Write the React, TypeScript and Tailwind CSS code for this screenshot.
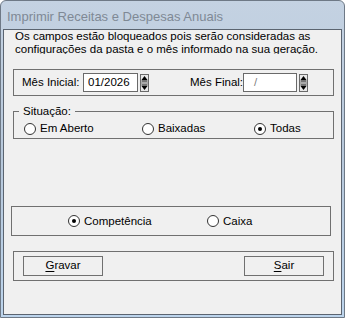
import React from 'react';

const font = { fontFamily: '"Liberation Sans", Arial, sans-serif' };

function Radio({ checked, label }: { checked?: boolean; label: string }) {
  return (
    <div className="flex items-center gap-[4px]">
      <span className="w-[12px] h-[12px] rounded-full border border-[#333] bg-white flex items-center justify-center">
        {checked && <span className="w-[4px] h-[4px] rounded-full bg-black" />}
      </span>
      <span className="text-[11.5px] text-black leading-[13px] whitespace-nowrap">{label}</span>
    </div>
  );
}

function Spin() {
  return (
    <svg width="9" height="18" viewBox="0 0 9 18" className="block">
      <rect x="0.5" y="0.5" width="8" height="17" fill="#e8e8e8" stroke="#6a6a6a" />
      <line x1="1" y1="9" x2="8" y2="9" stroke="#6a6a6a" />
      <polygon points="4.5,2 7.5,6 1.5,6" fill="#000" />
      <rect x="1.5" y="6.5" width="6" height="1" fill="#000" />
      <rect x="1.5" y="10.5" width="6" height="1" fill="#000" />
      <polygon points="1.5,12 7.5,12 4.5,16" fill="#000" />
    </svg>
  );
}

function Button({ first, rest }: { first: string; rest: string }) {
  return (
    <button className="w-[80px] h-[20px] border border-[#707070] bg-[#f0f0f0] text-[11.5px] text-black leading-none flex items-center justify-center">
      <span className="underline underline-offset-[2px]">{first}</span>
      {rest}
    </button>
  );
}

export default function App() {
  return (
    <div className="w-[345px] h-[318px] bg-white" style={font}>
      <div className="w-[345px] h-[318px] flex flex-col rounded-t-[6px] border border-[#6e7986] bg-gradient-to-b from-[#c4d2e2] via-[#b7c8db] to-[#bcd4ec] overflow-hidden">
        {/* Title bar */}
        <div className="h-[28px] flex items-center pl-[6px] pt-[4px] shrink-0">
          <span className="text-[13px] text-[#7f8995] whitespace-nowrap">Imprimir Receitas e Despesas Anuais</span>
        </div>

        {/* Body */}
        <div className="flex-1 mx-[2px] mb-[2px] border border-[#5b6470] bg-[#f0f0f0] flex flex-col">
          <div className="h-[24px] overflow-hidden pl-[11px] text-[11.5px] leading-[13px] text-black whitespace-nowrap">
            <p>Os campos estão bloqueados pois serão consideradas as</p>
            <p>configurações da pasta e o mês informado na sua geração.</p>
          </div>

          {/* Mês group */}
          <div className="mt-[15px] ml-[9px] w-[321px] h-[27px] border border-[#707070] flex items-center">
            <span className="ml-[8px] w-[61px] text-[11.5px] text-black whitespace-nowrap">Mês Inicial:</span>
            <div className="w-[55px] h-[19px] bg-white border border-[#6a6a6a] flex items-center pl-[4px] text-[11.5px] text-black">
              01/2026
            </div>
            <div className="ml-[2px]"><Spin /></div>
            <span className="ml-[41px] w-[53px] text-[11.5px] text-black whitespace-nowrap">Mês Final:</span>
            <div className="w-[54px] h-[19px] bg-white border border-[#6a6a6a] flex items-center pl-[10px] text-[11.5px] text-[#808080]">
              /
            </div>
            <div className="ml-[2px]"><Spin /></div>
          </div>

          {/* Situação group */}
          <div className="relative mt-[15px] ml-[9px] w-[321px] h-[28px] border border-[#707070] flex items-end pb-[3px]">
            <span className="absolute left-[5px] top-[-8px] px-[4px] bg-[#f0f0f0] text-[11.5px] leading-[14px] text-black whitespace-nowrap">
              Situação:
            </span>
            <div className="ml-[10px] w-[118px]"><Radio label="Em Aberto" /></div>
            <div className="w-[112px]"><Radio label="Baixadas" /></div>
            <Radio checked label="Todas" />
          </div>

          {/* Competência / Caixa */}
          <div className="mt-[67px] ml-[7px] w-[320px] h-[30px] border border-[#707070] flex items-center">
            <div className="ml-[56px] w-[139px]"><Radio checked label="Competência" /></div>
            <Radio label="Caixa" />
          </div>

          {/* Buttons */}
          <div className="mt-[15px] ml-[9px] w-[321px] h-[30px] border border-[#707070] flex items-center justify-between px-[9px]">
            <Button first="G" rest="ravar" />
            <Button first="S" rest="air" />
          </div>
        </div>
      </div>
    </div>
  );
}
